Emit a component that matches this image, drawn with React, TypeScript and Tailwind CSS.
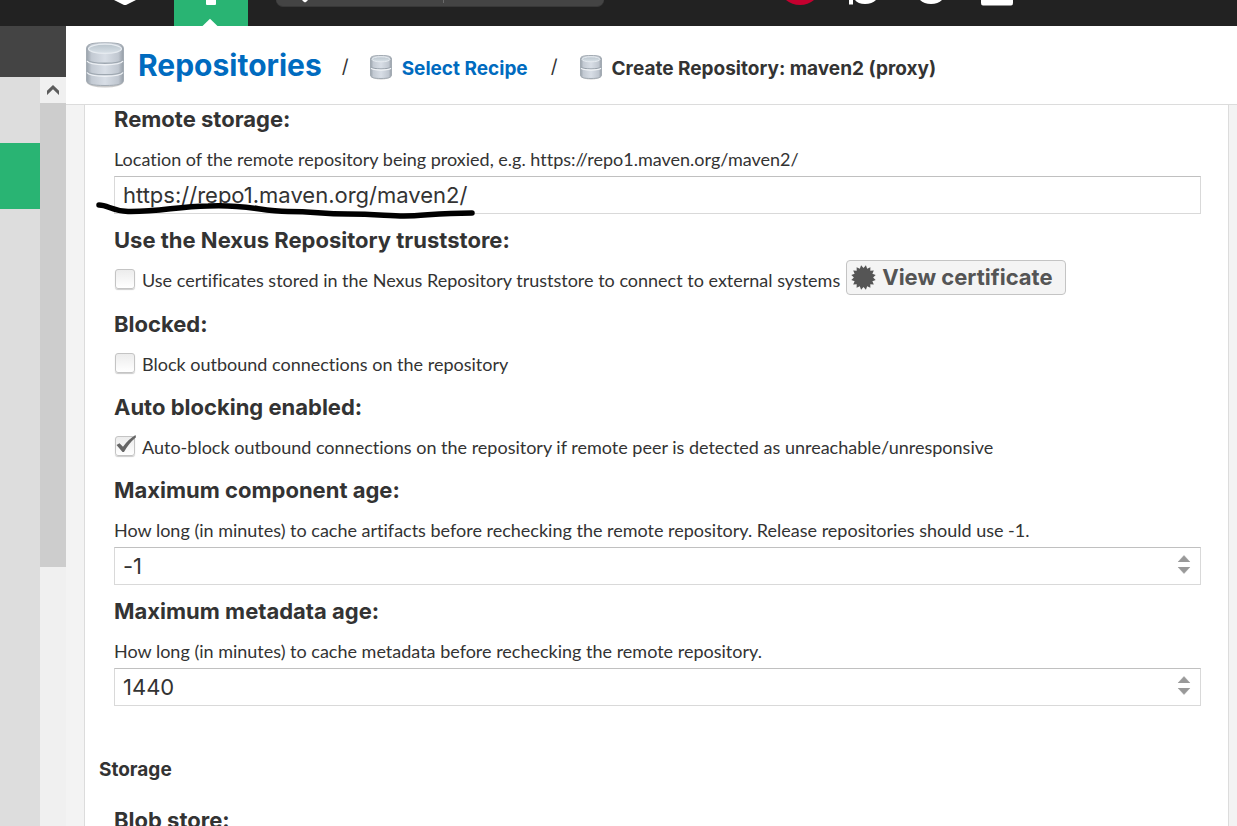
import { useId, useState } from "react";
import type { ReactNode } from "react";

function DatabaseIcon({ tiers, className }: { tiers: 2 | 3; className: string }) {
  const gradient = useId();
  const lid = useId();
  const height = tiers === 3 ? 46 : 25;
  return (
    <svg viewBox={tiers === 3 ? "0 0 40 46" : "0 0 22 25"} className={className} aria-hidden="true">
      <defs>
        <linearGradient id={gradient} x1="0" x2="1" y1="0" y2="0">
          <stop offset="0" stopColor="#99a2ab" />
          <stop offset="0.14" stopColor="#c3cad3" />
          <stop offset="0.5" stopColor="#d8dee6" />
          <stop offset="0.86" stopColor="#c0c7d0" />
          <stop offset="1" stopColor="#959da6" />
        </linearGradient>
        <linearGradient id={lid} x1="0" x2="0" y1="0" y2="1">
          <stop offset="0" stopColor="#b9c4cc" />
          <stop offset="1" stopColor="#d9e1e8" />
        </linearGradient>
      </defs>
      {tiers === 3 ? (
        <>
          <ellipse cx="20" cy={height - 6} rx="18.5" ry="5.5" fill="#8a8a8a" opacity="0.45" />
          <path d="M1.5 7C1.5 2 6 .8 20 .8s18.500 1.200 18.500 6.200v31c0 4-5 5.500-18.500 5.500S1.500 42 1.500 38Z" fill={`url(#${gradient})`} stroke="#a3abb3" strokeWidth="1" />
          <ellipse cx="20" cy="6.800" rx="16.500" ry="4.600" fill={`url(#${lid})`} stroke="#e6ebf0" strokeWidth="1.200" />
          <path d="M2 17.500C5 22.500 35 22.500 38 17.500M2 29C5 34 35 34 38 29" fill="none" stroke="#9ea7b0" strokeWidth="1.300" />
          <path d="M2 19C5 24 35 24 38 19M2 30.500C5 35.500 35 35.500 38 30.500" fill="none" stroke="#eef1f5" strokeWidth="1.400" />
        </>
      ) : (
        <>
          <ellipse cx="11" cy={height - 4} rx="10" ry="3.500" fill="#8a8a8a" opacity="0.45" />
          <path d="M.5 4C.5 1.500 3 .5 11 .5S21.500 1.500 21.500 4v16c0 2.500-3 3.500-10.500 3.500S.5 22.500.5 20Z" fill={`url(#${gradient})`} stroke="#a3abb3" />
          <ellipse cx="11" cy="4.300" rx="9" ry="2.500" fill={`url(#${lid})`} stroke="#e6ebf0" />
          <path d="M1 12C3 14.500 19 14.500 21 12" fill="none" stroke="#98a1aa" />
          <path d="M1 13.200C3 15.700 19 15.700 21 13.200" fill="none" stroke="#f0f3f6" strokeWidth="1.100" />
        </>
      )}
    </svg>
  );
}

const BADGE_POINTS = Array.from({ length: 32 }, (_, i) => {
  const radius = i % 2 === 0 ? 12.4 : 9.6;
  const angle = (i * Math.PI) / 16 + Math.PI / 16;
  return `${(12.5 + radius * Math.sin(angle)).toFixed(2)},${(12.5 - radius * Math.cos(angle)).toFixed(2)}`;
}).join(" ");

function TopBar() {
  return (
    <header className="flex h-[26px] items-start overflow-hidden bg-[#222222]">
      <a href="#home" aria-label="Home" className="ml-[113px] w-6">
        <svg viewBox="0 0 24 6" className="block h-[6px] w-6" aria-hidden="true">
          <path d="M1 0h22l-9 4.500q-2 1-4 0Z" fill="#fff" />
        </svg>
      </a>
      <button type="button" aria-label="Administration" className="ml-[37px] h-[26px] w-[74px] bg-[#29b473]">
        <svg viewBox="0 0 74 26" className="block h-[26px] w-[74px]" aria-hidden="true">
          <path d="M32 0h10v4q0 1-1 1h-8q-1 0-1-1Z" fill="#fff" />
          <path d="M28.500 26 36 18.800 43.500 26Z" fill="#fff" />
        </svg>
      </button>
      <div className="ml-7 flex h-[7px] w-[328px] items-start rounded-b-[16px] border-b border-[#383838] bg-[#444444]">
        <svg viewBox="0 0 6 3" className="ml-[26px] h-[3px] w-[6px]" aria-hidden="true">
          <path d="M0 0h6L4 2Q3 2.500 2 2Z" fill="#fff" />
        </svg>
        <span className="ml-[135px] h-[3px] w-px bg-[#6a6a6a]" />
      </div>
      <svg viewBox="0 0 30 6" className="ml-[181px] h-[6px] w-[30px]" aria-hidden="true">
        <path d="M1 0h28Q23 5 15 5T1 0Z" fill="#c4002f" />
      </svg>
      <svg viewBox="0 0 30 6" className="ml-8 h-[6px] w-[30px]" aria-hidden="true">
        <path d="M2 0h4v4.500H2ZM8 0h21q-4 4-11 4T8 0Z" fill="#fff" />
      </svg>
      <svg viewBox="0 0 24 6" className="ml-[42px] h-[6px] w-6" aria-hidden="true">
        <path d="M1 0h22q-4 4-11 4T1 0Z" fill="#fff" />
      </svg>
      <svg viewBox="0 0 32 6" className="ml-[38px] h-[6px] w-8" aria-hidden="true">
        <path d="M0 0h32v3q0 2.600-2 2.600H2Q0 5.600 0 3Z" fill="#fff" />
      </svg>
    </header>
  );
}

function SideBar() {
  return (
    <aside className="flex w-[66px] shrink-0 flex-col">
      <div className="h-[51px] bg-[#444444]" />
      <div className="flex flex-1">
        <nav className="w-10 bg-[#dddddd] pt-[66px]" aria-label="Administration sections">
          <a href="#repository" aria-label="Repository" className="block h-[66px] bg-[#29b473]" />
        </nav>
        <div className="flex w-[26px] flex-col bg-[#f0f0f0]">
          <button type="button" aria-label="Scroll up" className="flex h-[26px] items-center justify-center">
            <svg viewBox="0 0 14 12" className="h-3 w-[14px]" aria-hidden="true">
              <path d="M1 6.800 7 1l6 5.800V11L7 5.200 1 11Z" fill="#5c5c5c" />
            </svg>
          </button>
          <div className="h-[464px] bg-[#cdcdcd]" />
        </div>
      </div>
    </aside>
  );
}

function Breadcrumb() {
  return (
    <nav aria-label="Breadcrumb" className="flex h-[79px] items-center border-b border-[#dcdcdc] bg-white pl-[19px] font-['Inter',sans-serif] font-bold whitespace-nowrap">
      <DatabaseIcon tiers={3} className="h-[46px] w-10 shrink-0" />
      <a href="#repositories" className="ml-[13px] text-[30px] leading-9 text-[#006bbf]">Repositories</a>
      <span className="ml-5 pt-1 text-[19px] font-normal">/</span>
      <DatabaseIcon tiers={2} className="mt-1 ml-[21px] h-[25px] w-[22px] shrink-0" />
      <a href="#recipe" className="ml-[10px] pt-2 text-[19px] leading-6 text-[#006bbf]">Select Recipe</a>
      <span className="ml-[23px] pt-1 text-[19px] font-normal">/</span>
      <DatabaseIcon tiers={2} className="mt-1 ml-[22px] h-[25px] w-[22px] shrink-0" />
      <span className="ml-[10px] pt-2 text-[19px] leading-6">Create Repository: maven2 (proxy)</span>
    </nav>
  );
}

const headingClass = "block font-['Inter',sans-serif] text-[22px] leading-7 font-bold";
const inputClass =
  "block h-[38px] w-full border border-[#d9d9d9] border-t-[#c0c0c0] bg-white pl-2 font-['Inter',sans-serif] text-[22px] outline-none";

function SpinnerArrows({ onStep }: { onStep: (delta: number) => void }) {
  return (
    <div className="absolute top-2 right-[10px] flex flex-col gap-[5px]">
      <button type="button" aria-label="Increase" onClick={() => onStep(1)}>
        <svg viewBox="0 0 14 7" className="block h-[7px] w-[14px]" aria-hidden="true">
          <path d="M1 7 7 .5 13 7Z" fill="#999" stroke="#999" strokeLinejoin="round" strokeWidth=".5" />
        </svg>
      </button>
      <button type="button" aria-label="Decrease" onClick={() => onStep(-1)}>
        <svg viewBox="0 0 14 7" className="block h-[7px] w-[14px]" aria-hidden="true">
          <path d="M1 0 7 6.500 13 0Z" fill="#999" stroke="#999" strokeLinejoin="round" strokeWidth=".5" />
        </svg>
      </button>
    </div>
  );
}

function Field({ id, label, hint, initial, numeric, children }: { id: string; label: string; hint: string; initial: string; numeric?: boolean; children?: ReactNode }) {
  const [value, setValue] = useState(initial);
  return (
    <div className="mb-3">
      <label htmlFor={id} className={headingClass}>{label}</label>
      <p className="mt-[14px] text-[18px] leading-6">{hint}</p>
      <div className="relative mt-[5px]">
        <input id={id} value={value} onChange={(e) => setValue(e.target.value)} className={inputClass} />
        {numeric && <SpinnerArrows onStep={(delta) => setValue(String(Number(value) + delta))} />}
        {children}
      </div>
    </div>
  );
}

function CheckField({ id, label, text, checked: initial = false, children }: { id: string; label: string; text: string; checked?: boolean; children?: ReactNode }) {
  const [checked, setChecked] = useState(initial);
  return (
    <div className="mb-[15px]">
      <h2 className={headingClass}>{label}</h2>
      <div className="mt-[6px] flex min-h-[34px] items-center whitespace-nowrap">
        <span className="relative mt-[3px] ml-px h-5 w-5 shrink-0">
          <input
            id={id}
            type="checkbox"
            checked={checked}
            onChange={(e) => setChecked(e.target.checked)}
            className="block h-5 w-5 appearance-none rounded-[3px] border border-[#c4c4c4] bg-linear-to-b from-[#ececec] to-white shadow-[0_1px_1px_#cccccc]"
          />
          {checked && (
            <svg viewBox="0 0 22 20" className="pointer-events-none absolute -top-px left-0 h-5 w-[22px]" aria-hidden="true">
              <path d="M1.500 10 4.500 8.200 8 11.800Q13 4.500 20.500 0L21 2.200Q13.500 8.500 9 17H7.500Z" fill="#666" />
            </svg>
          )}
        </span>
        <label htmlFor={id} className="ml-[7px] pt-[5px] text-[18px] leading-6">{text}</label>
        {children}
      </div>
    </div>
  );
}

export default function App() {
  return (
    <div className="flex h-screen flex-col overflow-hidden bg-white font-['Lato',sans-serif] text-[#333333] [font-variant-ligatures:none]">
      <TopBar />
      <div className="flex min-h-0 flex-1">
        <SideBar />
        <div className="flex min-w-0 flex-1 flex-col">
          <Breadcrumb />
          <main className="min-h-0 flex-1 overflow-hidden bg-[#f3f3f3] pr-2 pl-[18px]">
            <form className="min-h-full border-x border-[#dcdcdc] bg-white pr-[27px] pl-[29px]" onSubmit={(e) => e.preventDefault()}>
              <Field
                id="remote-storage"
                label="Remote storage:"
                hint="Location of the remote repository being proxied, e.g. https://repo1.maven.org/maven2/"
                initial="https://repo1.maven.org/maven2/"
              >
                <svg viewBox="0 0 382 20" className="pointer-events-none absolute top-[24px] -left-[20px] h-5 w-[382px]" aria-hidden="true">
                  <path
                    d="M5 5C14 5 18 11 34 11.500C66 12 82 6.500 114 6C152 4 166 11 194 11.500C222 11.500 226 14 254 14C282 14 294 16 310 16C330 16 342 13 378 13"
                    fill="none"
                    stroke="#000"
                    strokeWidth="5.500"
                    strokeLinecap="round"
                  />
                </svg>
              </Field>
              <CheckField
                id="truststore"
                label="Use the Nexus Repository truststore:"
                text="Use certificates stored in the Nexus Repository truststore to connect to external systems"
              >
                <button type="button" className="ml-[6px] flex h-[35px] items-center rounded-[4px] border border-[#c4c4c4] bg-[#f4f4f4] pr-3 pb-px pl-1 font-['Inter',sans-serif] text-[22px] leading-7 font-bold text-[#555555]">
                  <svg viewBox="0 0 25 25" className="mr-[6px] h-[25px] w-[25px]" aria-hidden="true">
                    <polygon points={BADGE_POINTS} fill="#555" />
                  </svg>
                  View certificate
                </button>
              </CheckField>
              <CheckField id="blocked" label="Blocked:" text="Block outbound connections on the repository" />
              <CheckField
                id="auto-block"
                label="Auto blocking enabled:"
                text="Auto-block outbound connections on the repository if remote peer is detected as unreachable/unresponsive"
                checked
              />
              <Field
                id="component-age"
                label="Maximum component age:"
                hint="How long (in minutes) to cache artifacts before rechecking the remote repository. Release repositories should use -1."
                initial="-1"
                numeric
              />
              <Field
                id="metadata-age"
                label="Maximum metadata age:"
                hint="How long (in minutes) to cache metadata before rechecking the remote repository."
                initial="1440"
                numeric
              />
              <h2 className="mt-[52px] -ml-[15px] font-['Inter',sans-serif] text-[19px] leading-6 font-bold">Storage</h2>
              <h3 className={`mt-6 ${headingClass}`}>Blob store:</h3>
            </form>
          </main>
        </div>
      </div>
    </div>
  );
}
